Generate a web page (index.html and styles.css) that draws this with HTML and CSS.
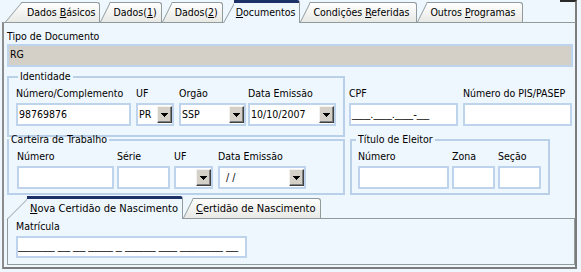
FILE: index.html
```html
<!DOCTYPE html>
<html>
<head>
    <title>Documentos</title>
    <link rel="stylesheet" href="styles.css">
</head>
<body>
    <div class="tabs tabs-main">
        <div class="tab first"><span>Dados <u>B</u>ásicos</span></div>
        <div class="tab"><span>Dados(<u>1</u>)</span></div>
        <div class="tab"><span>Dados(<u>2</u>)</span></div>
        <div class="tab active"><span><u>D</u>ocumentos</span></div>
        <div class="tab wide"><span>Condições <u>R</u>eferidas</span></div>
        <div class="tab wide"><span>Outros <u>P</u>rogramas</span></div>
        <div class="corner"></div>
    </div>
    <div class="panel">
        <div class="lbl">Tipo de Documento</div>
        <div class="field ro">RG</div>

        <div class="row r1">
            <fieldset class="group g-ident">
                <legend>Identidade</legend>
                <div class="fields">
                    <div class="col w115 mr5"><div class="lbl">Número/Complemento</div><div class="field">98769876</div></div>
                    <div class="col w38 mr5"><div class="lbl">UF</div><div class="field combo"><span>PR</span><span class="btn"><svg width="7" height="4" viewBox="0 0 7 4"><rect x="0" y="0" width="7" height="1"/><rect x="1" y="1" width="5" height="1"/><rect x="2" y="2" width="3" height="1"/><rect x="3" y="3" width="1" height="1"/></svg></span></div></div>
                    <div class="col w67 mr2"><div class="lbl">Orgão</div><div class="field combo"><span>SSP</span><span class="btn"><svg width="7" height="4" viewBox="0 0 7 4"><rect x="0" y="0" width="7" height="1"/><rect x="1" y="1" width="5" height="1"/><rect x="2" y="2" width="3" height="1"/><rect x="3" y="3" width="1" height="1"/></svg></span></div></div>
                    <div class="col w88"><div class="lbl">Data Emissão</div><div class="field combo"><span>10/10/2007</span><span class="btn"><svg width="7" height="4" viewBox="0 0 7 4"><rect x="0" y="0" width="7" height="1"/><rect x="1" y="1" width="5" height="1"/><rect x="2" y="2" width="3" height="1"/><rect x="3" y="3" width="1" height="1"/></svg></span></div></div>
                </div>
            </fieldset>
            <div class="fields side">
                <div class="col w109 mr5"><div class="lbl">CPF</div><div class="field"><span class="mask">___.___.___-__</span></div></div>
                <div class="col w109"><div class="lbl">Número do PIS/PASEP</div><div class="field"></div></div>
            </div>
        </div>

        <div class="row r2">
            <fieldset class="group g-ctps">
                <legend>Carteira de Trabalho</legend>
                <div class="fields">
                    <div class="col w97 mr3"><div class="lbl">Número</div><div class="field"></div></div>
                    <div class="col w53 mr4"><div class="lbl">Série</div><div class="field"></div></div>
                    <div class="col w39 mr5"><div class="lbl">UF</div><div class="field combo"><span></span><span class="btn"><svg width="7" height="4" viewBox="0 0 7 4"><rect x="0" y="0" width="7" height="1"/><rect x="1" y="1" width="5" height="1"/><rect x="2" y="2" width="3" height="1"/><rect x="3" y="3" width="1" height="1"/></svg></span></div></div>
                    <div class="col w88"><div class="lbl">Data Emissão</div><div class="field combo"><span class="date">&nbsp;/&nbsp;/</span><span class="btn"><svg width="7" height="4" viewBox="0 0 7 4"><rect x="0" y="0" width="7" height="1"/><rect x="1" y="1" width="5" height="1"/><rect x="2" y="2" width="3" height="1"/><rect x="3" y="3" width="1" height="1"/></svg></span></div></div>
                </div>
            </fieldset>
            <fieldset class="group g-titulo">
                <legend>Título de Eleitor</legend>
                <div class="fields">
                    <div class="col w91 mr3"><div class="lbl">Número</div><div class="field"></div></div>
                    <div class="col w43 mr3"><div class="lbl">Zona</div><div class="field"></div></div>
                    <div class="col w43"><div class="lbl">Seção</div><div class="field"></div></div>
                </div>
            </fieldset>
        </div>

        <div class="tabs subtabs">
            <div class="tab first active"><span><u>N</u>ova Certidão de Nascimento</span></div>
            <div class="tab"><span><u>C</u>ertidão de Nascimento</span></div>
        </div>
        <div class="subpanel">
            <div class="col w231">
                <div class="lbl">Matrícula</div>
                <div class="field mat"><span class="mask">______ __ __ ____ _ _____ ___ _______ __</span></div>
            </div>
        </div>
    </div>
</body>
</html>
```

FILE: styles.css
```css
* {
    box-sizing: border-box;
}
body {
    margin: 0;
    width: 581px;
    height: 272px;
    overflow: hidden;
    background-color: #eff7fe;
    font-family: "DejaVu Sans Condensed", "Liberation Sans", sans-serif;
    font-size: 10.5px;
    line-height: 13px;
    color: #000;
}
u {
    text-underline-offset: 1px;
}

/* Tab strips */
.tabs {
    display: flex;
    align-items: flex-end;
    position: relative;
    z-index: 1;
}
.tabs-main {
    margin-left: 2px;
    width: 575px;
    height: 22px;
    padding-left: 3px;
}
.tab {
    position: relative;
    z-index: 0;
    display: flex;
    align-items: flex-end;
    height: 20px;
    padding: 0 5px 3px 13px;
    white-space: nowrap;
}
.tab.wide {
    padding-right: 8px;
}
.subtabs .tab {
    font-size: 11px;
}
.tab::before {
    content: "";
    position: absolute;
    top: 0;
    right: 0;
    bottom: 0;
    left: 10px;
    border-top: 1px solid #919b9c;
    border-right: 1px solid #919b9c;
    border-top-right-radius: 3px;
    background: linear-gradient(#ffffff, #e8e8e5);
    z-index: -1;
}
.tab::after {
    content: "";
    position: absolute;
    top: 0;
    bottom: 0;
    left: 0;
    width: 16px;
    border-top: 1px solid #919b9c;
    border-left: 1px solid #919b9c;
    background: linear-gradient(#ffffff, #e8e8e5);
    transform-origin: 0 100%;
    transform: skewX(-26.5deg);
    z-index: -2;
}
.tab.first {
    padding-left: 22px;
}
.tab.first::before {
    left: 17px;
}
.tab.first::after {
    width: 22px;
    transform: skewX(-40deg);
}
.tab.active {
    height: 23px;
    margin-bottom: -1px;
    padding-bottom: 4px;
}
.tab.active::before {
    left: 11px;
    border-top: 3px solid #1b2f69;
    background: #eff7fe;
}
.tab.active::after {
    top: 3px;
    background: #eff7fe;
    transform: skewX(-29deg);
}
.subtabs .tab.first {
    padding-left: 23px;
}
.subtabs .tab.first::before {
    left: 20px;
}
.subtabs .tab.first::after {
    width: 26px;
    transform: skewX(-45deg);
}
.corner {
    margin-left: auto;
    align-self: stretch;
    width: 17px;
    border-top: 2px solid #2a2a2a;
    border-right: 2px solid #7c7c7c;
}

/* Main page */
.panel {
    margin-left: 2px;
    width: 575px;
    border-top: 1px solid #919b9c;
    border-left: 2px solid #8c8c8c;
    border-right: 2px solid #7c7c7c;
    border-bottom: 2px solid #7c7c7c;
    padding: 7px 2px 2px 3px;
    display: flex;
    flex-direction: column;
}
.lbl {
    height: 13px;
    white-space: nowrap;
}
.field {
    height: 23px;
    border: 2px solid #bdd4ec;
    background-color: #fff;
    display: flex;
    align-items: center;
    padding: 0 0 1px 1px;
    white-space: nowrap;
    overflow: hidden;
}
.field.ro {
    margin-top: 1px;
    background-color: #d4d0c8;
    padding-bottom: 2px;
}
.mask {
    font-family: "Liberation Sans", sans-serif;
    font-size: 11px;
}
.combo {
    justify-content: space-between;
}
.date {
    padding-left: 2px;
}
.btn {
    flex: none;
    width: 15px;
    height: 17px;
    margin-top: 1px;
    background-color: #d4d0c8;
    border: 1px solid;
    border-color: #f4f2ee #404040 #404040 #f4f2ee;
    box-shadow: inset -1px -1px #808080;
    display: flex;
    align-items: center;
    justify-content: center;
}
.btn svg {
    display: block;
    margin: 1px 1px 0 0;
}

/* Group boxes */
.row {
    display: flex;
}
.r1 {
    margin-top: 4px;
}
.r2 {
    margin-top: -3px;
}
.group {
    margin: 0;
    min-width: 0;
    border: 2px solid #b9d0e8;
}
.group legend {
    padding: 0 2px;
    line-height: 11px;
    white-space: nowrap;
}
.g-ident {
    width: 338px;
    padding: 5px 0 9px 7px;
}
.g-ident legend {
    margin-left: 2px;
}
.g-ctps {
    width: 338px;
    padding: 5px 0 4px 8px;
}
.g-ctps legend {
    margin-left: -8px;
}
.g-titulo {
    width: 200px;
    margin-left: 5px;
    padding: 5px 0 4px 6px;
}
.g-titulo legend {
    margin-left: -2px;
}
.fields {
    display: flex;
}
.side {
    margin-left: 4px;
    padding-top: 16px;
}
.col {
    display: flex;
    flex-direction: column;
}
.col .lbl {
    margin-bottom: 3px;
}
.w38 { width: 38px; }
.w39 { width: 39px; }
.w43 { width: 43px; }
.w53 { width: 53px; }
.w67 { width: 67px; }
.w88 { width: 88px; }
.w91 { width: 91px; }
.w97 { width: 97px; }
.w109 { width: 109px; }
.w115 { width: 115px; }
.w231 { width: 231px; }
.mr2 { margin-right: 2px; }
.mr3 { margin-right: 3px; }
.mr4 { margin-right: 4px; }
.mr5 { margin-right: 5px; }

/* Certidão sub page */
.subtabs {
    margin-top: 1px;
    height: 22px;
}
.subpanel {
    margin-right: -2px;
    border: 1px solid #919b9c;
    padding: 1px 0 6px 8px;
}
.field.mat {
    height: 22px;
    padding-left: 0;
}
```
